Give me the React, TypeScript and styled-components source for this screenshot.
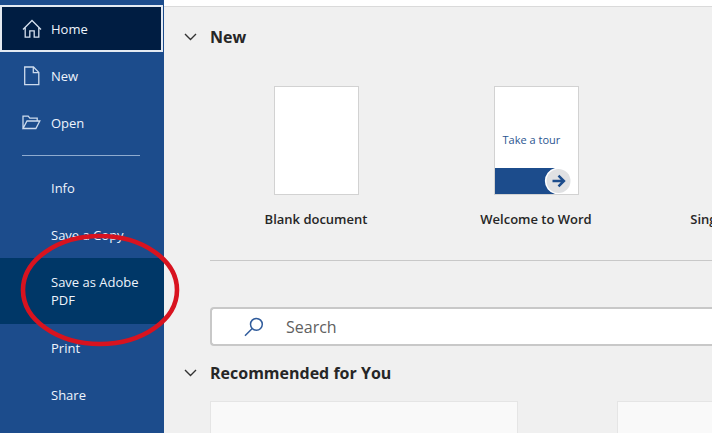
import React from "react";
import styled, { createGlobalStyle, css } from "styled-components";

const GlobalStyle = createGlobalStyle`
  *, *::before, *::after { box-sizing: border-box; }
  body {
    margin: 0;
    background: #f0f0f0;
    color: #262626;
    font-family: "Open Sans", "Noto Sans", sans-serif;
    font-size: 13px;
  }
  button, input { font: inherit; color: inherit; }
  h2 { margin: 0; }
`;

const Shell = styled.div`
  display: flex;
  height: 100vh;
  overflow: hidden;
`;

const Sidebar = styled.nav`
  position: relative;
  flex: 0 0 164px;
  padding-top: 5px;
  background: #1c4c8c;
  color: #eef4fc;
`;

const NavItem = styled.button<{ $tone?: "selected" | "hover" }>`
  display: flex;
  align-items: center;
  width: 100%;
  min-height: 47px;
  padding: 0 16px 0 22px;
  border: 0;
  background: none;
  line-height: 18px;
  text-align: left;
  cursor: pointer;
  ${(p) =>
    p.$tone === "selected" &&
    css`
      width: calc(100% - 1px);
      padding-left: 20px;
      border: 2px solid #e4eaf2;
      background: #001d42;
    `}
  ${(p) =>
    p.$tone === "hover" &&
    css`
      min-height: 66px;
      background: #003767;
    `}
`;

const IconSlot = styled.span`
  flex: 0 0 29px;
  height: 20px;
  svg { display: block; }
`;

const NavRule = styled.hr`
  margin: 9px 24px 8px 22px;
  border: 0;
  border-top: 1px solid #8fabcf;
`;

const Highlight = styled.svg`
  position: absolute;
  z-index: 1;
  left: 20px;
  top: 233px;
  pointer-events: none;
`;

const Main = styled.main`
  display: flex;
  flex: 1;
  flex-direction: column;
  min-width: 0;
  overflow: hidden;
`;

const TitleStrip = styled.div`
  flex: 0 0 7px;
  border-bottom: 1px solid #dadada;
  background: #fff;
`;

const SectionHeading = styled.h2`
  font-size: 16px;
  font-weight: 600;
  line-height: 24px;
`;

const SectionToggle = styled.button`
  display: flex;
  align-items: center;
  padding: 0 0 0 20px;
  border: 0;
  background: none;
  font-weight: 700;
  cursor: pointer;
  svg { margin-right: 13px; }
`;

const NewSection = styled.section`
  padding-top: 18px;
`;

const Templates = styled.div`
  display: flex;
  padding: 37px 0 0 42px;
`;

const Template = styled.button`
  display: flex;
  flex: 0 0 220px;
  flex-direction: column;
  align-items: center;
  gap: 14px;
  padding: 0;
  border: 0;
  background: none;
  font-weight: 600;
  line-height: 20px;
  white-space: nowrap;
  cursor: pointer;
`;

const Thumbnail = styled.span`
  display: flex;
  flex-direction: column;
  justify-content: flex-end;
  width: 85px;
  height: 109px;
  border: 1px solid #d2d2d2;
  background: #fff;
`;

const TourText = styled.span`
  padding: 0 0 20px 8px;
  color: #2b5591;
  font-size: 11px;
  font-weight: 500;
  line-height: 16px;
  text-align: left;
`;

const ContentRule = styled.hr`
  width: calc(100% - 46px);
  margin: 31px 0 46px 46px;
  border: 0;
  border-top: 1px solid #c8c8c8;
`;

const SearchBox = styled.label`
  display: flex;
  flex: 0 0 39px;
  align-items: center;
  gap: 22px;
  margin-left: 46px;
  padding-left: 32px;
  border: 2px solid #c8c8c8;
  border-right: 0;
  border-radius: 4px 0 0 4px;
  background: #fff;
`;

const SearchInput = styled.input`
  flex: 1;
  min-width: 0;
  padding: 0;
  border: 0;
  outline: 0;
  background: none;
  font-size: 16px;
  line-height: 24px;
  &::placeholder { color: #606060; opacity: 1; }
`;

const Recommended = styled.section`
  display: flex;
  flex: 1;
  flex-direction: column;
  padding-top: 15px;
`;

const Cards = styled.div`
  display: flex;
  flex: 1;
  gap: 99px;
  padding: 16px 0 0 46px;
`;

const Card = styled.article`
  flex: 0 0 308px;
  border: 1px solid #e5e5e5;
  border-bottom: 0;
  background: #f9f9f9;
`;

const HomeIcon = () => (
  <svg width="20" height="20" viewBox="0 0 20 20" fill="none" stroke="#d5e0ee" strokeWidth="1.3">
    <path d="M1 10.5 10 1.5l9 9M3.2 8.8v9.4h4.6v-6.4h4.4v6.4h4.6V8.8" />
  </svg>
);

const PageIcon = () => (
  <svg width="20" height="20" viewBox="0 0 20 20" fill="none" stroke="#cddbed" strokeWidth="1.3">
    <path d="M2.7 1h8.8l5.3 5.4v12.3H2.7zM11.3 1v5.6h5.5" />
  </svg>
);

const FolderIcon = () => (
  <svg width="20" height="20" viewBox="0 0 20 20" fill="none" stroke="#cddbed" strokeWidth="1.3">
    <path d="M1 15.5V3.2h5.2l1.6 1.9h7.4v3M1 15.5 5 8h12.8l-3.9 7.5z" />
  </svg>
);

const Chevron = () => (
  <svg width="13" height="12" viewBox="0 0 13 12" fill="none" stroke="#333" strokeWidth="1.4">
    <path d="m1 3 5.5 5.5L12 3" />
  </svg>
);

const SearchIcon = () => (
  <svg width="20" height="20" viewBox="0 0 20 20" fill="none" stroke="#2f5b9b" strokeWidth="1.5">
    <circle cx="12.4" cy="7.3" r="5.9" />
    <path d="M8.2 11.5 1 18.7" />
  </svg>
);

const TourBanner = () => (
  <svg width="83" height="26" viewBox="0 0 83 26">
    <path d="M0 0h60a13.4 13.4 0 0 0 0 26H0z" fill="#1c4c8c" />
    <circle cx="63.5" cy="13" r="12" fill="#e0e1e3" />
    <path d="M57.5 13h11M63.5 7.6l5.4 5.4-5.4 5.4" fill="none" stroke="#1c4c8c" strokeWidth="2.5" />
  </svg>
);

const places = [
  { label: "Home", Icon: HomeIcon, tone: "selected" as const },
  { label: "New", Icon: PageIcon },
  { label: "Open", Icon: FolderIcon },
];

const actions = [
  { label: "Info" },
  { label: "Save a Copy" },
  { label: "Save as Adobe PDF", tone: "hover" as const },
  { label: "Print" },
  { label: "Share" },
];

export default function App() {
  return (
    <>
      <GlobalStyle />
      <Shell>
        <Sidebar aria-label="File">
          {places.map(({ label, Icon, tone }) => (
            <NavItem key={label} $tone={tone}>
              <IconSlot><Icon /></IconSlot>
              {label}
            </NavItem>
          ))}
          <NavRule />
          {actions.map(({ label, tone }) => (
            <NavItem key={label} $tone={tone}>
              <IconSlot />
              {label}
            </NavItem>
          ))}
          <Highlight width="161" height="114" viewBox="0 0 161 114" aria-hidden="true">
            <ellipse cx="80" cy="57" rx="77" ry="54" fill="none" stroke="#d8131f" strokeWidth="4.6" />
          </Highlight>
        </Sidebar>
        <Main>
          <TitleStrip />
          <NewSection>
            <SectionHeading>
              <SectionToggle aria-expanded="true"><Chevron />New</SectionToggle>
            </SectionHeading>
            <Templates>
              <Template>
                <Thumbnail />
                Blank document
              </Template>
              <Template>
                <Thumbnail>
                  <TourText>Take a tour</TourText>
                  <TourBanner />
                </Thumbnail>
                Welcome to Word
              </Template>
              <Template>
                <Thumbnail />
                Single spaced (blank)
              </Template>
            </Templates>
          </NewSection>
          <ContentRule />
          <SearchBox>
            <SearchIcon />
            <SearchInput type="search" placeholder="Search" aria-label="Search" />
          </SearchBox>
          <Recommended>
            <SectionHeading>
              <SectionToggle aria-expanded="true"><Chevron />Recommended for You</SectionToggle>
            </SectionHeading>
            <Cards>
              <Card />
              <Card />
            </Cards>
          </Recommended>
        </Main>
      </Shell>
    </>
  );
}
